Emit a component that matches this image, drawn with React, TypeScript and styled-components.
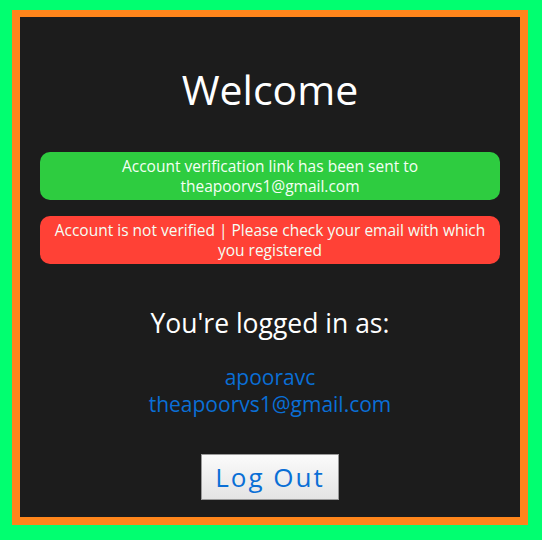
import React from "react";
import styled, { createGlobalStyle } from "styled-components";

const GlobalStyle = createGlobalStyle`
  html, body {
    margin: 0;
    padding: 0;
    background: #01ff70;
  }
  body {
    font-family: "Open Sans", "Liberation Sans", sans-serif;
  }
`;

const Page = styled.div`
  width: 542px;
  height: 540px;
  padding: 10px 0 0 12px;
  box-sizing: border-box;
`;

const Frame = styled.main`
  width: 460px;
  height: 500px;
  border: 8px solid #ff851b;
  border-top-width: 7px;
  background: #1c1c1c;
  display: flex;
  flex-direction: column;
  align-items: center;
  padding: 0 20px;
  box-sizing: content-box;
`;

const Title = styled.h1`
  margin: 48px 0 0;
  font-size: 41px;
  line-height: 48px;
  font-weight: 400;
  color: #ffffff;
`;

const Alert = styled.div<{ $tone: "success" | "error"; $gap: number }>`
  width: 460px;
  box-sizing: border-box;
  margin-top: ${(p) => p.$gap}px;
  padding: 4px 6px;
  border-radius: 10px;
  background: ${(p) => (p.$tone === "success" ? "#2ecc40" : "#ff4136")};
  color: #f4fff4;
  font-size: 15.5px;
  line-height: 20px;
  text-align: center;
`;

const Subtitle = styled.h2`
  margin: 42px 0 0;
  font-size: 26.5px;
  line-height: 34px;
  font-weight: 400;
  color: #ffffff;
`;

const UserInfo = styled.div`
  margin-top: 24px;
  display: flex;
  flex-direction: column;
  align-items: center;
  color: #0a6fd6;
  font-size: 21px;
  line-height: 27px;
`;

const LogoutButton = styled.button`
  margin-top: 36px;
  width: 138px;
  height: 46px;
  border: 1px solid #9a9a9a;
  background: linear-gradient(#fbfbfb, #e4e4e4);
  color: #0a6fd6;
  font-family: "Open Sans", "Liberation Sans", sans-serif;
  font-size: 26px;
  letter-spacing: 2px;
  padding: 0;
  cursor: pointer;
`;

export default function App() {
  return (
    <>
      <GlobalStyle />
      <Page>
        <Frame>
          <Title>Welcome</Title>
          <Alert $tone="success" $gap={39}>
            Account verification link has been sent to
            <br />
            theapoorvs1@gmail.com
          </Alert>
          <Alert $tone="error" $gap={16}>
            Account is not verified | Please check your email with which you registered
          </Alert>
          <Subtitle>You're logged in as:</Subtitle>
          <UserInfo>
            <span>apooravc</span>
            <span>theapoorvs1@gmail.com</span>
          </UserInfo>
          <LogoutButton>Log Out</LogoutButton>
        </Frame>
      </Page>
    </>
  );
}
